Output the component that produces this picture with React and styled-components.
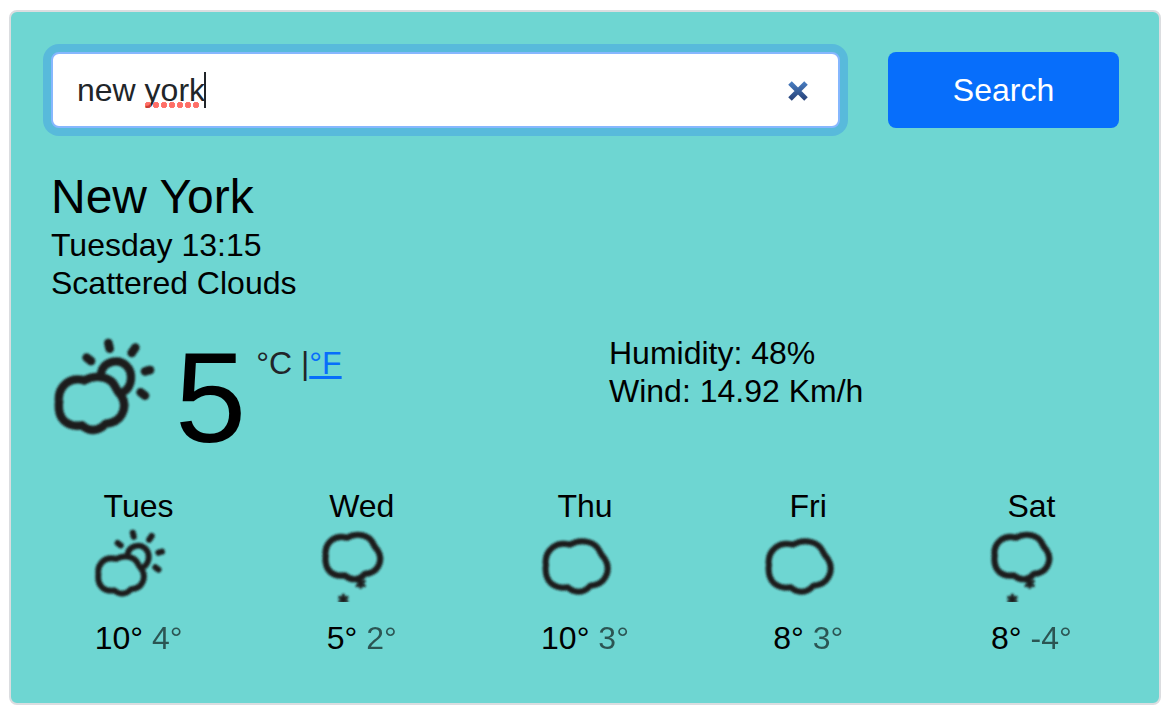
import React from "react";
import styled, { createGlobalStyle } from "styled-components";

const GlobalStyle = createGlobalStyle`
  *, *::before, *::after { box-sizing: border-box; }
  body {
    margin: 0;
    background: #fff;
    color: #000;
    font-family: "Liberation Sans", Arial, sans-serif;
    font-size: 32px;
    line-height: 38px;
  }
`;

const Card = styled.main`
  margin: 10px 15px 13px 9px;
  padding: 40px 40px 46px;
  border: 2px solid #dbdde0;
  border-radius: 8px;
  background: #6ed6d2;
`;

const SearchForm = styled.form`
  display: grid;
  grid-template-columns: repeat(12, minmax(0, 1fr));
  margin: 0 -24px;
`;

const SearchField = styled.div`
  position: relative;
  grid-column: span 9;
  margin: 0 24px;
`;

const SearchInput = styled.input`
  display: block;
  width: 100%;
  height: 76px;
  padding: 0 80px 0 24px;
  border: 2px solid #86b7fe;
  border-radius: 8px;
  outline: none;
  box-shadow: 0 0 0 8px #58badb;
  background: #fff;
  color: #212529;
  font: inherit;
  caret-color: transparent;
`;

const SpellingMark = styled.span`
  position: absolute;
  left: 94px;
  top: 50px;
  width: 56px;
  height: 6px;
  background: radial-gradient(circle at 3px 3px, rgba(255, 70, 60, 0.78) 0 2px, rgba(255, 70, 60, 0.72) 3px, transparent 3px) 0 0 / 8px 6px;
  pointer-events: none;
`;

const Caret = styled.span`
  position: absolute;
  left: 153px;
  top: 20px;
  width: 2px;
  height: 36px;
  background: #212529;
  pointer-events: none;
`;

const ClearButton = styled.button`
  position: absolute;
  right: 24px;
  top: 21px;
  display: grid;
  place-items: center;
  width: 36px;
  height: 36px;
  padding: 0;
  border: 0;
  background: none;
`;

const SearchButton = styled.button`
  grid-column: span 3;
  height: 76px;
  margin: 0 24px;
  padding: 0;
  border: 0;
  border-radius: 8px;
  background: #076efb;
  color: #fff;
  font: inherit;
`;

const City = styled.h1`
  margin: 40px 0 0;
  font-size: 48px;
  font-weight: 400;
  line-height: 58px;
`;

const PlainList = styled.ul`
  margin: 0;
  padding: 0;
  list-style: none;
`;

const Current = styled.section`
  display: grid;
  grid-template-columns: 1fr 1fr;
  column-gap: 48px;
  margin-top: 32px;
`;

const Reading = styled.div`
  display: flex;
  align-items: flex-start;
`;

const Degrees = styled.strong`
  font-size: 128px;
  font-weight: 400;
  line-height: 128px;
`;

const Units = styled.span`
  margin: 10px 0 0 10px;
  color: #212529;
  white-space: pre;
`;

const UnitLink = styled.a`
  color: #076efb;
  text-decoration: underline;
  text-decoration-thickness: 3px;
  text-underline-offset: 2px;
`;

const Forecast = styled.section`
  display: grid;
  grid-template-columns: repeat(5, minmax(0, 1fr));
  margin: 25px -24px 0;
`;

const Day = styled.article`
  display: flex;
  flex-direction: column;
  align-items: center;
`;

const DayName = styled.h2`
  margin: 0 0 5px;
  font: inherit;
`;

const DayTemps = styled.p`
  margin: 17px 0 0;
`;

const Low = styled.span`
  opacity: 0.6;
`;

const Drawing = styled.svg`
  display: block;
  flex: none;
  fill: none;
  stroke: #1c1c1c;
  stroke-linecap: round;
  stroke-linejoin: round;
  overflow: ${(p) => (p.$clip ? "hidden" : "visible")};
`;

const CLOUD =
  "M120 193C102 188 82 190 68 201C52 214 46 230 47 248Q49 254 47 260C46 280 50 297 63 309C76 320 95 324 113 321C133 339 160 340 181 316C200 315 217 307 226 291C236 273 235 252 224 235C217 228 213 222 209 213C196 183 153 174 120 193Z";

const Soften = ({ id, amount }) => (
  <filter id={id} x="-20%" y="-20%" width="140%" height="140%">
    <feGaussianBlur stdDeviation={amount} />
  </filter>
);

function PartlySunny({ id, small }) {
  return (
    <Drawing
      width={small ? 100 : 124}
      height={small ? 72 : 100}
      viewBox={small ? "17 56 429 309" : "33 41 372 300"}
      strokeWidth="25"
      aria-hidden="true"
    >
      <Soften id={id} amount={small ? 4 : 3} />
      <g filter={`url(#${id})`}>
        <path d={CLOUD} transform="translate(7 -23) scale(1.053)" strokeWidth="24" />
        <path d="M183 158C190 124 235 112 259 136C282 159 276 201 249 216" />
        <path d="M205 68L209 85M286 82L275 98M140 112L153 122M315 153L330 149M302 216L315 226" strokeWidth="26" />
      </g>
    </Drawing>
  );
}

function Cloudy({ id }) {
  return (
    <Drawing width="100" height="72" viewBox="15 149 300 216" strokeWidth="18" aria-hidden="true">
      <Soften id={id} amount={3} />
      <g filter={`url(#${id})`}>
        <path d={CLOUD} />
      </g>
    </Drawing>
  );
}

function Snowy({ id }) {
  return (
    <Drawing $clip width="100" height="72" viewBox="36 150 300 216" strokeWidth="21" aria-hidden="true">
      <Soften id={id} amount={3} />
      <g filter={`url(#${id})`}>
        <path d={CLOUD} transform="translate(35 3) scale(.882)" />
        <path strokeWidth="9" d="M182 299V322M171 304L193 317M193 304L171 317M130 345V370M119 352L141 364M141 352L119 364" />
      </g>
    </Drawing>
  );
}

const icons = {
  sun: (id) => <PartlySunny id={id} small />,
  cloud: (id) => <Cloudy id={id} />,
  snow: (id) => <Snowy id={id} />,
};

const days = [
  { name: "Tues", icon: "sun", high: "10°", low: "4°" },
  { name: "Wed", icon: "snow", high: "5°", low: "2°" },
  { name: "Thu", icon: "cloud", high: "10°", low: "3°" },
  { name: "Fri", icon: "cloud", high: "8°", low: "3°" },
  { name: "Sat", icon: "snow", high: "8°", low: "-4°" },
];

export default function App() {
  return (
    <>
      <GlobalStyle />
      <Card>
        <SearchForm onSubmit={(e) => e.preventDefault()}>
          <SearchField>
            <SearchInput type="text" aria-label="City" defaultValue="new york" spellCheck={false} />
            <SpellingMark />
            <Caret />
            <ClearButton type="reset" aria-label="Clear">
              <svg width="22" height="22" viewBox="0 0 22 22" aria-hidden="true">
                <linearGradient id="clear" gradientUnits="userSpaceOnUse" x1="0" y1="1" x2="0" y2="21">
                  <stop stopColor="#4a80c4" />
                  <stop offset="1" stopColor="#263f75" />
                </linearGradient>
                <path d="M3 3L19 19M19 3L3 19" stroke="url(#clear)" strokeWidth="5" />
              </svg>
            </ClearButton>
          </SearchField>
          <SearchButton type="submit">Search</SearchButton>
        </SearchForm>

        <City>New York</City>
        <PlainList>
          <li>Tuesday 13:15</li>
          <li>Scattered Clouds</li>
        </PlainList>

        <Current>
          <Reading>
            <PartlySunny id="soft-now" />
            <Degrees>5</Degrees>
            <Units>°C |<UnitLink href="#fahrenheit">°F</UnitLink></Units>
          </Reading>
          <PlainList>
            <li>Humidity: 48%</li>
            <li>Wind: 14.92 Km/h</li>
          </PlainList>
        </Current>

        <Forecast>
          {days.map((day) => (
            <Day key={day.name}>
              <DayName>{day.name}</DayName>
              {icons[day.icon](`soft-${day.name}`)}
              <DayTemps>
                {day.high} <Low>{day.low}</Low>
              </DayTemps>
            </Day>
          ))}
        </Forecast>
      </Card>
    </>
  );
}
